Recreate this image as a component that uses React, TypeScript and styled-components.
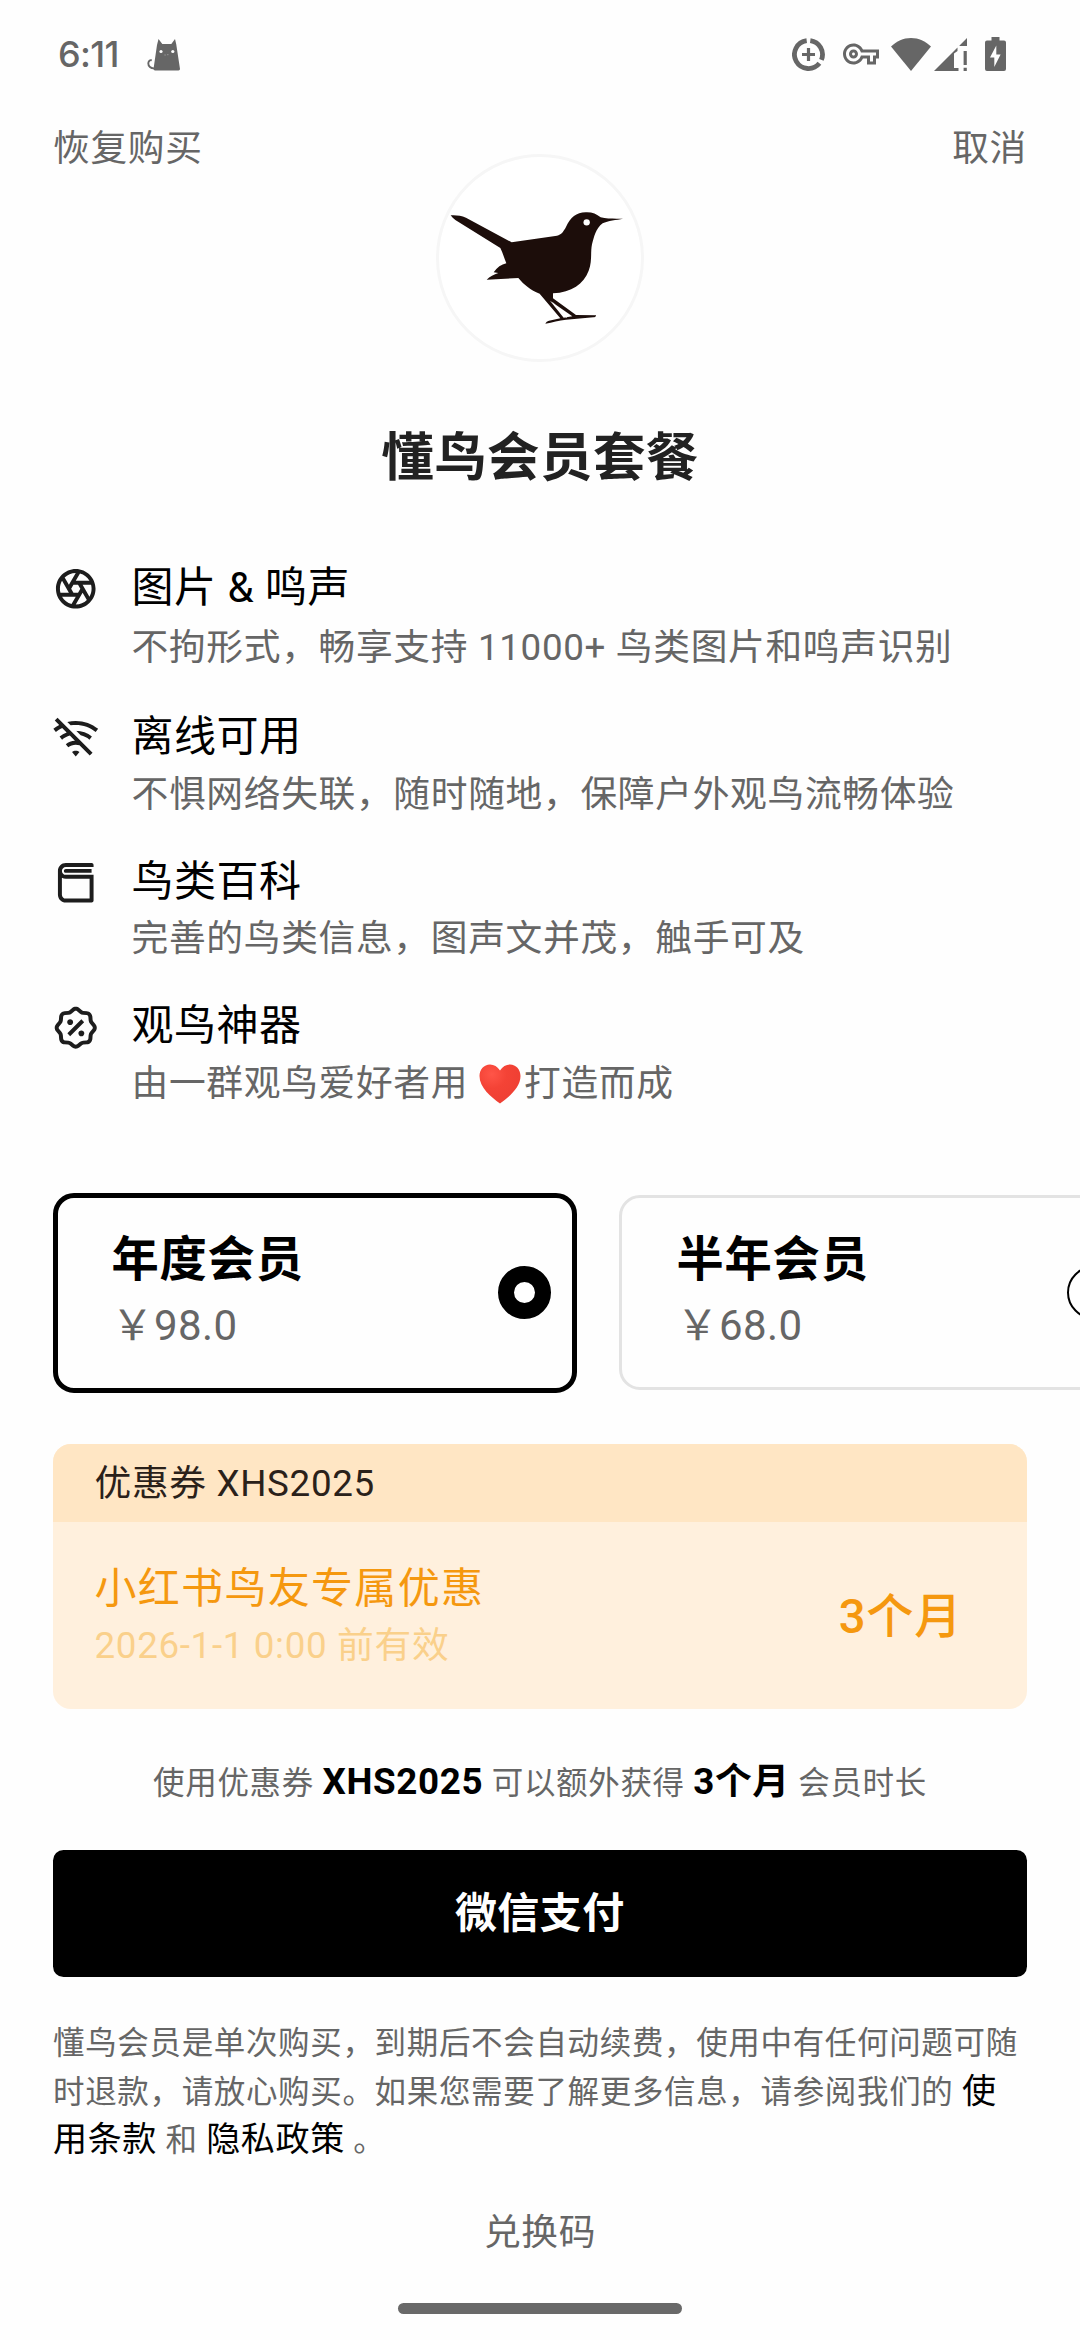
import React from "react";
import styled, { createGlobalStyle } from "styled-components";
import {
  RiCameraLensLine,
  RiWifiOffLine,
  RiBook3Line,
  RiDiscountPercentLine,
} from "react-icons/ri";
import { MdOutlineVpnKey } from "react-icons/md";

const GlobalStyle = createGlobalStyle`
  * { box-sizing: border-box; }
  body {
    margin: 0;
    background: #fefefe;
    font-family: Roboto, "Noto Sans CJK SC", sans-serif;
    -webkit-font-smoothing: antialiased;
  }
`;

const Screen = styled.main`
  display: flex;
  flex-direction: column;
  width: 1080px;
  height: 2340px;
  overflow: hidden;
  background: #fefefe;
  color: #000;
`;

const StatusBar = styled.div`
  display: flex;
  align-items: center;
  height: 108px;
  flex: none;
  padding: 0 74px 0 58px;
  color: #666;
`;

const Clock = styled.span`
  width: 89px;
  font: 500 36px/44px Inter, sans-serif;
  letter-spacing: -0.7px;
`;

const StatusIcons = styled.div`
  display: flex;
  align-items: center;
  margin-left: auto;
`;

const StatusIcon = styled.svg<{ $gap?: number }>`
  display: block;
  margin-left: ${(p) => p.$gap ?? 0}px;
`;

const KeyIcon = styled(MdOutlineVpnKey)`
  display: block;
  width: 36px;
  height: 36px;
  margin-left: 18px;
`;

const Header = styled.header`
  display: grid;
  grid-template-columns: 1fr 208px 1fr;
  align-items: start;
  flex: none;
  padding: 17px 53px 0;
`;

const TextButton = styled.button<{ $align?: string }>`
  padding: 0;
  border: 0;
  background: none;
  color: #666;
  font: 400 36.75px/48px Roboto, "Noto Sans CJK SC", sans-serif;
  letter-spacing: 0.66px;
  text-align: ${(p) => p.$align ?? "left"};
`;

const Avatar = styled.div`
  width: 208px;
  height: 208px;
  margin-top: 29px;
  border: 3px solid #f6f6f6;
  border-radius: 50%;
  background: #fff;

  svg {
    display: block;
    margin: -3px;
  }
`;

const Title = styled.h1`
  margin: 66px 0 0;
  color: #222;
  font-size: 52.5px;
  font-weight: 700;
  line-height: 60px;
  letter-spacing: 0.4px;
  text-align: center;
`;

const Features = styled.ul`
  display: flex;
  flex-direction: column;
  gap: 39px;
  margin: 75.5px 0 0;
  padding: 0 52px;
  list-style: none;
`;

const Feature = styled.li`
  display: flex;
  gap: 32px;

  > svg {
    flex: none;
    width: 47.5px;
    height: 47.5px;
    margin-top: 1.5px;
    color: #1d1d1d;
  }
`;

const FeatureText = styled.div`
  display: flex;
  flex-direction: column;
  gap: 9.5px;
`;

const FeatureTitle = styled.h2`
  margin: 0;
  font-size: 42px;
  font-weight: 400;
  line-height: 48px;
  letter-spacing: 0.5px;
`;

const FeatureBody = styled.p<{ $tall?: boolean }>`
  display: flex;
  align-items: center;
  margin: 0;
  color: #666;
  font-size: 36.75px;
  line-height: ${(p) => (p.$tall ? 53 : 48)}px;
  letter-spacing: 0.66px;
  white-space: pre;
`;

const Heart = styled.svg`
  display: block;
  width: 42px;
  height: 40px;
  margin: 0 3px 0 1px;
`;

const Plans = styled.div`
  display: flex;
  align-items: center;
  gap: 42px;
  flex: none;
  height: 200px;
  margin-top: 85px;
  padding-left: 52.5px;
  overflow: hidden;
`;

const Plan = styled.div<{ $selected?: boolean }>`
  display: flex;
  align-items: center;
  justify-content: space-between;
  flex: none;
  width: 524.5px;
  height: ${(p) => (p.$selected ? 200 : 195)}px;
  padding: ${(p) => (p.$selected ? "0 21px 0 54px" : "0 21px 0 54.5px")};
  border: ${(p) => (p.$selected ? "5px solid #000" : "3px solid #e3e3e3")};
  border-radius: 21px;
  background: #fefefe;
`;

const PlanName = styled.div`
  font-size: 47.25px;
  font-weight: 700;
  line-height: 66px;
  letter-spacing: 0.8px;
`;

const PlanPrice = styled.div`
  color: #666;
  font-size: 42px;
  line-height: 66px;
  letter-spacing: 0.4px;
`;

const Radio = styled.span<{ $selected?: boolean }>`
  width: 53px;
  height: 53px;
  border: ${(p) => (p.$selected ? 16 : 2.6)}px solid #000;
  border-radius: 50%;
  background: #fff;
`;

const Coupon = styled.section`
  display: flex;
  flex-direction: column;
  flex: none;
  height: 265px;
  margin: 51.5px 53px 0 52.5px;
  border-radius: 18px;
  overflow: hidden;
  background: #fff0dd;
`;

const CouponHead = styled.div`
  height: 77.5px;
  padding-left: 42px;
  background: #ffe6c4;
  color: #2a211a;
  font-size: 36.75px;
  line-height: 80px;
  letter-spacing: 0.66px;
`;

const CouponBody = styled.div`
  display: flex;
  align-items: center;
  justify-content: space-between;
  height: 187.5px;
  padding: 4px 65px 0 42px;
  color: #f5980f;
`;

const CouponName = styled.div`
  font-size: 42px;
  line-height: 57px;
  letter-spacing: 1.31px;
`;

const CouponDate = styled.div`
  color: #fad08b;
  font-size: 36.75px;
  line-height: 57px;
  letter-spacing: 0.66px;
`;

const CouponValue = styled.div`
  font-size: 47.25px;
  font-weight: 500;
  line-height: 60px;
  letter-spacing: 0.6px;
`;

const Note = styled.p`
  margin: 48.5px 0 0;
  color: #666;
  font-size: 31.5px;
  line-height: 48px;
  letter-spacing: 0.66px;
  text-align: center;

  b {
    color: #000;
    font-size: 36.75px;
    font-weight: 700;
  }
`;

const PayButton = styled.button`
  flex: none;
  height: 127px;
  margin: 42px 53px 0 52.5px;
  padding: 2px 0 0;
  border: 0;
  border-radius: 10.5px;
  background: #000;
  color: #fff;
  font: 700 42px/60px Roboto, "Noto Sans CJK SC", sans-serif;
  letter-spacing: 0.4px;
`;

const Terms = styled.p`
  margin: 43.5px 53px 0;
  color: #666;
  font-size: 31.5px;
  line-height: 47.5px;
  letter-spacing: 0.66px;

  a {
    color: #000;
    font-size: 34.1px;
    letter-spacing: 0.6px;
  }
`;

const RedeemButton = styled(TextButton)`
  margin-top: 44.5px;
`;

const HomeIndicator = styled.div`
  flex: none;
  width: 284px;
  height: 11px;
  margin: auto auto 26.5px;
  border-radius: 6px;
  background: #696969;
`;

const CatIcon = () => (
  <StatusIcon width="34" height="33" viewBox="0 0 34 33" fill="currentColor">
    <path
      d="M8 30.3C3.6 31 1.2 28 1.3 25.3 1.4 22.9 3 21.7 4.8 22.3"
      fill="none"
      stroke="currentColor"
      strokeWidth="1.9"
    />
    <path d="M6.5 31 10 7 11.5 1l3.8 5h9L28 1l1.2 5L33 31q0 1.4-1.5 1.4H8q-1.5 0-1.5-1.4Z" />
    <circle cx="14" cy="13.5" r="1.6" fill="#fefefe" />
    <circle cx="25.8" cy="13.5" r="1.6" fill="#fefefe" />
    <path d="M17.4 17h1.4m1.3-.3h1.4" stroke="#999" strokeWidth="1" />
  </StatusIcon>
);

const DataSaverIcon = () => (
  <StatusIcon width="33" height="33" viewBox="0 0 33 33" fill="none" stroke="currentColor">
    <path
      d="M14.7 2.65A14 14 0 1 0 27.4 25.3M18.3 2.65A14 14 0 0 1 29.4 21.9"
      strokeWidth="4.8"
    />
    <path d="M16.5 10v13M10 16.5h13" strokeWidth="3.2" />
  </StatusIcon>
);

const WifiIcon = () => (
  <StatusIcon $gap={11.5} width="40" height="33" viewBox="0 0 40 33" fill="currentColor">
    <path d="M0 8.6C5.5 3.2 12.3 0 20 0s14.5 3.2 20 8.6L20 33Z" />
  </StatusIcon>
);

const SignalIcon = () => (
  <StatusIcon $gap={3} width="33" height="33" viewBox="0 0 33 33" fill="currentColor">
    <path d="M0 33 23.5 9.5V13L20 15.5V30h4.5v3ZM25.5 7.5 33 0v8h-7.5ZM29.6 13h3.2v14h-3.2ZM29.6 29.8h3.2V33h-3.2Z" />
  </StatusIcon>
);

const BatteryIcon = () => (
  <StatusIcon $gap={18.5} width="21" height="34" viewBox="0 0 21 34" fill="currentColor">
    <path
      fillRule="evenodd"
      d="M6.5 0h8v3.500H19Q21 3.500 21 5.500V32q0 2-2 2H2q-2 0-2-2V5.500Q0 3.500 2 3.500H6.500ZM11.300 8.500 5 20.500h4.300V30l6.300-12.500h-4.300Z"
    />
  </StatusIcon>
);

const Bird = () => (
  <svg width="208" height="208" viewBox="47 41 624 624" fill="#1c0d0a">
    <path d="M91 225C108 224 122 226 137 232L274 306 410 286C423 284 430 274 438 258 450 232 468 217 496 216 515 215 528 221 541 231 561 236 586 235 608 235 588 239 563 241 547 249 526 264 521 291 515 312 510 335 516 364 505 391 490 431 454 456 398 459L398 474 467 524 527 525C528 528 524 530 519 531L437 538C415 540 397 546 375 550 377 545 381 542 386 541L420 534 358 460C330 449 312 434 294 413L199 418C208 409 221 402 234 398L220 396C230 381 243 373 258 369 252 355 248 339 240 323L105 239C99 235 95 230 91 225Z" />
    <path d="M389 481 430 532 456 528Z" fill="#fff" />
    <path d="M397 486 439 533" stroke="#fff" strokeWidth="2" />
    <circle cx="499" cy="246" r="9.5" fill="#fff" />
  </svg>
);

const HeartIcon = () => (
  <Heart viewBox="0 0 42 40">
    <defs>
      <radialGradient id="heart" cx="0.3" cy="0.25" r="0.8">
        <stop offset="0" stopColor="#ff5548" />
        <stop offset="0.45" stopColor="#f44336" />
        <stop offset="1" stopColor="#ee3f33" />
      </radialGradient>
    </defs>
    <path
      fill="url(#heart)"
      d="M21 6.5C18.5 2.5 15 .5 11 .5 5 .5.5 5.5.5 12 .5 23.500 12 33 21 39.500 30 33 41.500 23.500 41.500 12 41.500 5.500 37 .5 31 .5c-4 0-7.500 2-10 6Z"
    />
  </Heart>
);

const features = [
  {
    icon: RiCameraLensLine,
    title: "图片 & 鸣声",
    body: "不拘形式，畅享支持 11000+ 鸟类图片和鸣声识别",
    tall: true,
  },
  {
    icon: RiWifiOffLine,
    title: "离线可用",
    body: "不惧网络失联，随时随地，保障户外观鸟流畅体验",
  },
  {
    icon: RiBook3Line,
    title: "鸟类百科",
    body: "完善的鸟类信息，图声文并茂，触手可及",
  },
  {
    icon: RiDiscountPercentLine,
    title: "观鸟神器",
    body: (
      <>
        {"由一群观鸟爱好者用 "}
        <HeartIcon />
        打造而成
      </>
    ),
  },
];

const plans = [
  { name: "年度会员", price: "￥98.0", selected: true },
  { name: "半年会员", price: "￥68.0", selected: false },
];

export default function App() {
  return (
    <Screen lang="zh-CN">
      <GlobalStyle />
      <StatusBar>
        <Clock>6:11</Clock>
        <CatIcon />
        <StatusIcons>
          <DataSaverIcon />
          <KeyIcon />
          <WifiIcon />
          <SignalIcon />
          <BatteryIcon />
        </StatusIcons>
      </StatusBar>

      <Header>
        <TextButton>恢复购买</TextButton>
        <Avatar>
          <Bird />
        </Avatar>
        <TextButton $align="right">取消</TextButton>
      </Header>

      <Title>懂鸟会员套餐</Title>

      <Features>
        {features.map(({ icon: Icon, title, body, tall }) => (
          <Feature key={title}>
            <Icon />
            <FeatureText>
              <FeatureTitle>{title}</FeatureTitle>
              <FeatureBody $tall={tall}>{body}</FeatureBody>
            </FeatureText>
          </Feature>
        ))}
      </Features>

      <Plans>
        {plans.map((plan) => (
          <Plan key={plan.name} $selected={plan.selected}>
            <div>
              <PlanName>{plan.name}</PlanName>
              <PlanPrice>{plan.price}</PlanPrice>
            </div>
            <Radio $selected={plan.selected} />
          </Plan>
        ))}
      </Plans>

      <Coupon>
        <CouponHead>优惠券 XHS2025</CouponHead>
        <CouponBody>
          <div>
            <CouponName>小红书鸟友专属优惠</CouponName>
            <CouponDate>2026-1-1 0:00 前有效</CouponDate>
          </div>
          <CouponValue>3个月</CouponValue>
        </CouponBody>
      </Coupon>

      <Note>
        使用优惠券 <b>XHS2025</b> 可以额外获得 <b>3个月</b> 会员时长
      </Note>

      <PayButton>微信支付</PayButton>

      <Terms>
        懂鸟会员是单次购买，到期后不会自动续费，使用中有任何问题可随时退款，请放心购买。如果您需要了解更多信息，请参阅我们的{" "}
        <a>使用条款</a> 和 <a>隐私政策</a> 。
      </Terms>

      <RedeemButton $align="center">兑换码</RedeemButton>
      <HomeIndicator />
    </Screen>
  );
}
